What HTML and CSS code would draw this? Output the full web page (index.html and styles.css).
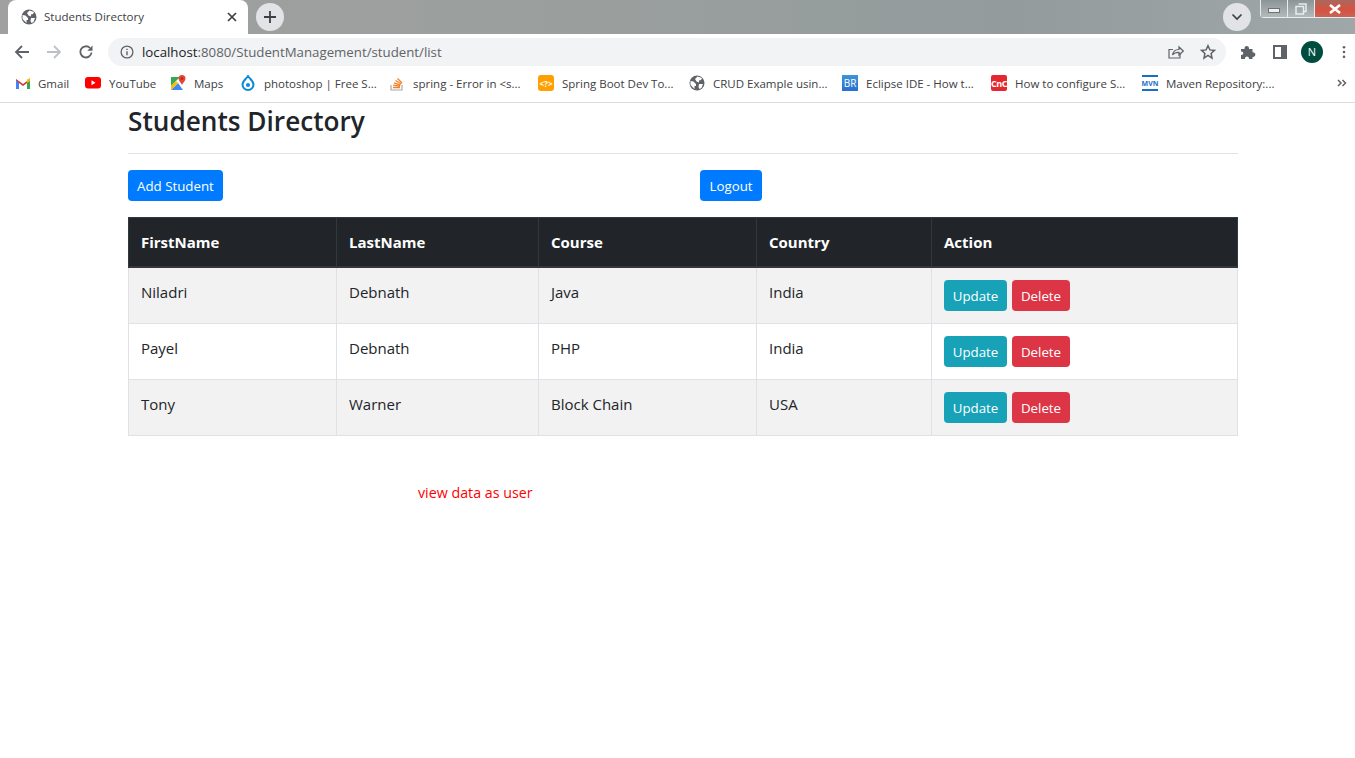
FILE: index.html
```html
<!DOCTYPE html>
<html lang="en">
<head>
    <meta charset="UTF-8">
    <title>Students Directory</title>
    <link rel="stylesheet" href="styles.css">
</head>
<body>
    <div class="browser">
        <div class="tabstrip">
            <div class="tab">
                <svg class="favicon" viewBox="0 0 16 16"><circle cx="8" cy="8" r="7.500" fill="#5f6368"/><path d="M1.500 6l3 .5 2.500 2.500 0 2-1.500 0 0 3-4-4zM8.500 1.500l4.500 1.500-1 2-2 .5 0 2-2.500-1-1.500-2.500zM10 9l4 0-1.500 4-2 1-1-2z" fill="#fff"/></svg>
                <span class="tab-title">Students Directory</span>
                <svg class="tab-close" viewBox="0 0 10 10"><path d="M1 1l8 8M9 1l-8 8" stroke="#3c4043" stroke-width="1.700"/></svg>
            </div>
            <div class="newtab"><svg viewBox="0 0 14 14"><path d="M7 1v12M1 7h12" stroke="#3c4043" stroke-width="1.800"/></svg></div>
            <div class="tabsearch"><svg viewBox="0 0 12 8"><path d="M1.500 1.500L6 6l4.500-4.500" fill="none" stroke="#3c4043" stroke-width="1.700"/></svg></div>
            <div class="winctl">
                <div class="win-btn"><span class="win-min"></span></div>
                <div class="win-btn"><svg viewBox="0 0 12 12"><path d="M3.500 1h7.500v7.500H8.500M1 3.500h7.500V11H1z" fill="none" stroke="#e8ecee" stroke-width="1.500"/></svg></div>
                <div class="win-btn win-close"><svg viewBox="0 0 14 10"><path d="M2 1l10 8M12 1L2 9" stroke="#fff" stroke-width="2.600"/></svg></div>
            </div>
        </div>
        <div class="toolbar">
            <svg class="nav-icon" viewBox="0 0 16 16"><path d="M15 8H2M8 2L2 8l6 6" fill="none" stroke="#5f6368" stroke-width="1.800"/></svg>
            <svg class="nav-icon" viewBox="0 0 16 16"><path d="M1 8h13M8 2l6 6-6 6" fill="none" stroke="#bdc1c6" stroke-width="1.800"/></svg>
            <svg class="nav-icon" viewBox="0 0 16 16"><path d="M13.500 8.500A5.600 5.600 0 1 1 12 4" fill="none" stroke="#5f6368" stroke-width="1.800"/><path d="M14.500 1.500v5.200H9.300z" fill="#5f6368"/></svg>
            <div class="omnibox">
                <svg class="info-icon" viewBox="0 0 14 14"><circle cx="7" cy="7" r="5.900" fill="none" stroke="#5f6368" stroke-width="1.300"/><path d="M7 6.200v4M7 3.800v1.300" stroke="#5f6368" stroke-width="1.400"/></svg>
                <span class="url"><span class="url-host">localhost</span>:8080/StudentManagement/student/list</span>
                <svg class="share-icon" viewBox="0 0 16 16"><path d="M12 9.500V14H1V5.500h4" fill="none" stroke="#5f6368" stroke-width="1.200"/><path d="M4.500 11c.5-3.500 3-5.500 6.500-5.500V3l4.300 4-4.300 4V8.300C8.500 8.200 6 9 4.500 11z" fill="none" stroke="#5f6368" stroke-width="1.200"/></svg>
                <svg class="star-icon" viewBox="0 0 16 16"><path d="M8 1.700l1.900 4.200 4.600.5-3.400 3.100.9 4.500L8 11.300l-4 2.700.9-4.500L1.500 6.400l4.600-.5z" fill="none" stroke="#5f6368" stroke-width="1.500"/></svg>
            </div>
            <svg class="ext-icon" viewBox="0 0 16 16"><path d="M1 5h3.500C4 1 9.500 1 9 5h3.500v3.300c3.800-.4 3.800 5 0 4.700V15H9c.3-3.300-4.300-3.300-4 0H1v-4c3 .3 3-3.800 0-3.500z" fill="#5f6368"/></svg>
            <div class="panel-icon"></div>
            <div class="avatar">N</div>
            <svg class="menu-icon" viewBox="0 0 4 16"><circle cx="2" cy="2.500" r="1.500" fill="#5f6368"/><circle cx="2" cy="8" r="1.500" fill="#5f6368"/><circle cx="2" cy="13.500" r="1.500" fill="#5f6368"/></svg>
        </div>
        <div class="bookmarks">
            <div class="bm bm-gmail">
                <svg viewBox="0 0 16 12"><path d="M1 12V2l7 5 7-5v10h-3V6L8 9 4 6v6z" fill="#d93025"/><path d="M1 12V3l3 3v6z" fill="#4285f4"/><path d="M15 12V3l-3 3v6z" fill="#34a853"/><path d="M12 2.500L15 1v3l-3 2z" fill="#fbbc04"/></svg>
                <span>Gmail</span>
            </div>
            <div class="bm bm-youtube">
                <svg viewBox="0 0 16 12"><rect width="16" height="11.500" rx="3" fill="#f00"/><path d="M6.500 3.300l4 2.500-4 2.500z" fill="#fff"/></svg>
                <span>YouTube</span>
            </div>
            <div class="bm bm-maps">
                <svg viewBox="0 0 16 16"><path d="M1 2h9l-9 9z" fill="#34a853"/><path d="M1 15l7-7 5 7z" fill="#4285f4"/><path d="M1 11l5-5 2 2-7 7z" fill="#fbbc04"/><path d="M12 0a3.500 3.500 0 0 1 3.500 3.500C15.500 6 13 7.500 12 10c-1-2.500-3.500-4-3.500-6.500A3.500 3.500 0 0 1 12 0z" fill="#ea4335"/><circle cx="12" cy="3.500" r="1.200" fill="#a52714"/></svg>
                <span>Maps</span>
            </div>
            <div class="bm bm-drupal">
                <svg viewBox="0 0 16 16"><path d="M8 1c1 2.500 5.500 4.500 5.500 8.500a5.500 5.500 0 0 1-11 0C2.500 5.500 7 3.500 8 1z" fill="none" stroke="#0a8bd6" stroke-width="2"/><circle cx="8" cy="10" r="2" fill="#0a8bd6"/></svg>
                <span>photoshop | Free S...</span>
            </div>
            <div class="bm bm-stack">
                <svg viewBox="0 0 16 16"><path d="M2 10v5h11v-5" fill="none" stroke="#a9a9a9" stroke-width="1.200"/><path d="M4 12.500h7M4.200 10.200l6.800 1M5 7.800l6.500 2.300M6.500 5.500l5.800 3.500M8.500 3.500l4.500 4.500" stroke="#f48024" stroke-width="1.300"/></svg>
                <span>spring - Error in &lt;s...</span>
            </div>
            <div class="bm bm-boot">
                <span class="bm-tile tile-boot">&lt;?&gt;</span>
                <span>Spring Boot Dev To...</span>
            </div>
            <div class="bm bm-crud">
                <svg viewBox="0 0 16 16"><circle cx="8" cy="8" r="7.500" fill="#5f6368"/><path d="M1.500 6l3 .5 2.500 2.500 0 2-1.500 0 0 3-4-4zM8.500 1.500l4.500 1.500-1 2-2 .5 0 2-2.500-1-1.500-2.500zM10 9l4 0-1.500 4-2 1-1-2z" fill="#fff"/></svg>
                <span>CRUD Example usin...</span>
            </div>
            <div class="bm bm-eclipse">
                <span class="bm-tile tile-br">BR</span>
                <span>Eclipse IDE - How t...</span>
            </div>
            <div class="bm bm-cnc">
                <span class="bm-tile tile-cnc">CnC</span>
                <span>How to configure S...</span>
            </div>
            <div class="bm bm-maven">
                <span class="bm-tile tile-mvn">MVN</span>
                <span>Maven Repository:...</span>
            </div>
            <svg class="bm-more" viewBox="0 0 10 8"><path d="M1 1l3 3-3 3M5.500 1l3 3-3 3" fill="none" stroke="#5f6368" stroke-width="1.500"/></svg>
        </div>
    </div>

    <div class="container">
        <h1>Students Directory</h1>
        <hr>
        <div class="actions">
            <div><a class="btn btn-primary" href="#">Add Student</a></div>
            <div><a class="btn btn-primary btn-logout" href="#">Logout</a></div>
        </div>
        <table class="students">
            <thead>
                <tr>
                    <th class="col-first">FirstName</th>
                    <th class="col-last">LastName</th>
                    <th class="col-course">Course</th>
                    <th class="col-country">Country</th>
                    <th>Action</th>
                </tr>
            </thead>
            <tbody>
                <tr>
                    <td>Niladri</td>
                    <td>Debnath</td>
                    <td>Java</td>
                    <td>India</td>
                    <td><div class="row-actions"><a class="btn btn-info" href="#">Update</a><a class="btn btn-danger" href="#">Delete</a></div></td>
                </tr>
                <tr>
                    <td>Payel</td>
                    <td>Debnath</td>
                    <td>PHP</td>
                    <td>India</td>
                    <td><div class="row-actions"><a class="btn btn-info" href="#">Update</a><a class="btn btn-danger" href="#">Delete</a></div></td>
                </tr>
                <tr>
                    <td>Tony</td>
                    <td>Warner</td>
                    <td>Block Chain</td>
                    <td>USA</td>
                    <td><div class="row-actions"><a class="btn btn-info" href="#">Update</a><a class="btn btn-danger" href="#">Delete</a></div></td>
                </tr>
            </tbody>
        </table>
        <div class="user-link"><a href="#">view data as user</a></div>
    </div>
</body>
</html>
```

FILE: styles.css
```css
* {
    box-sizing: border-box;
}
body {
    margin: 0;
    background-color: white;
    font-family: "Open Sans", "Noto Sans", Arial, sans-serif;
    color: #212529;
    overflow: hidden;
    height: 758px;
}

/* browser chrome */
.browser {
    height: 103px;
    border-bottom: 1px solid #dadce0;
    background-color: white;
}
.tabstrip {
    position: relative;
    height: 34px;
    display: flex;
    align-items: center;
    padding-left: 8px;
    background: linear-gradient(90deg, #a0a0a0 0%, #9a9f9e 45%, #939b9c 75%, #a0a7a9 100%);
}
.tab {
    width: 240px;
    height: 34px;
    align-self: flex-end;
    display: flex;
    align-items: center;
    padding: 0 11px 0 13px;
    background-color: white;
    border-radius: 8px 8px 0 0;
}
.favicon {
    width: 16px;
    height: 16px;
}
.tab-title {
    margin-left: 7px;
    padding-bottom: 2px;
    flex-grow: 1;
    font-size: 11.5px;
    color: #3c4043;
}
.tab-close {
    width: 10px;
    height: 10px;
}
.newtab, .tabsearch {
    width: 28px;
    height: 28px;
    border-radius: 50%;
    background-color: #e1e3e6;
    display: flex;
    align-items: center;
    justify-content: center;
}
.newtab {
    margin-left: 8px;
}
.newtab svg {
    width: 14px;
    height: 14px;
}
.tabsearch {
    margin-left: auto;
    margin-right: 104px;
}
.tabsearch svg {
    width: 12px;
    height: 8px;
}
.winctl {
    position: absolute;
    top: 0;
    right: 0;
    width: 95px;
    height: 18px;
    display: flex;
    border: 1px solid #e8ecee;
    border-top: none;
    border-right: none;
    border-radius: 0 0 0 4px;
}
.win-btn {
    width: 27px;
    display: flex;
    align-items: center;
    justify-content: center;
    border-right: 1px solid #e8ecee;
    background: linear-gradient(#8b9496, #b3babc);
}
.win-btn svg {
    width: 12px;
    height: 12px;
}
.win-close {
    flex-grow: 1;
    border-right: none;
    background: linear-gradient(#a9685e, #d9513f 60%, #c4665a);
}
.win-close svg {
    width: 14px;
    height: 10px;
}
.win-min {
    width: 12px;
    height: 5px;
    margin-top: 3px;
    background-color: #eef0f1;
    border: 1px solid #6d7375;
}
.toolbar {
    height: 32px;
    margin-top: 2px;
    display: flex;
    align-items: center;
    padding: 0 9px 0 14px;
    background-color: white;
}
.nav-icon {
    width: 16px;
    height: 16px;
    margin-right: 16px;
}
.omnibox {
    flex-grow: 1;
    height: 28px;
    margin-left: -2px;
    display: flex;
    align-items: center;
    padding: 0 10px 0 12px;
    border-radius: 14px;
    background-color: #f1f3f4;
}
.info-icon {
    width: 14px;
    height: 14px;
}
.url {
    margin-left: 8px;
    flex-grow: 1;
    font-size: 13.25px;
    color: #5f6368;
}
.url-host {
    color: #202124;
}
.share-icon {
    width: 16px;
    height: 16px;
    margin-right: 16px;
}
.star-icon {
    width: 16px;
    height: 16px;
}
.ext-icon {
    width: 16px;
    height: 16px;
    margin-left: 14px;
}
.panel-icon {
    width: 14px;
    height: 14px;
    margin-left: 17px;
    border: 2px solid #5f6368;
    border-right-width: 6px;
}
.avatar {
    width: 22px;
    height: 22px;
    margin-left: 14px;
    border-radius: 50%;
    background-color: #004d40;
    color: white;
    font-size: 11px;
    line-height: 22px;
    text-align: center;
}
.menu-icon {
    width: 4px;
    height: 14px;
    margin-left: 19px;
}
.bookmarks {
    position: relative;
    height: 36px;
    display: flex;
    align-items: center;
    font-size: 11.5px;
    color: #3c4043;
}
.bm {
    position: absolute;
    top: 7px;
    display: flex;
    align-items: center;
    gap: 8px;
    white-space: nowrap;
}
.bm svg, .bm-tile {
    width: 16px;
    height: 16px;
    flex-shrink: 0;
}
.bm-gmail { left: 15px; gap: 7px; }
.bm-youtube { left: 85px; }
.bm-maps { left: 170px; }
.bm-drupal { left: 240px; }
.bm-stack { left: 389px; }
.bm-boot { left: 538px; }
.bm-crud { left: 689px; }
.bm-eclipse { left: 842px; }
.bm-cnc { left: 991px; }
.bm-maven { left: 1142px; }
.bm-tile {
    display: flex;
    align-items: center;
    justify-content: center;
    color: white;
    font-size: 8px;
    font-weight: 700;
}
.tile-boot {
    background-color: #ffa000;
    border-radius: 3px;
}
.tile-br {
    background: linear-gradient(#3d95d8, #2a6fd0);
    font-weight: 400;
    font-size: 10px;
}
.tile-cnc {
    background-color: #e5282e;
    border-radius: 2px;
    font-size: 9px;
    letter-spacing: -0.5px;
}
.tile-mvn {
    color: #1a6fc4;
    font-size: 7px;
    border-top: 2px solid #1a6fc4;
    border-bottom: 2px solid #1a6fc4;
}
.bm-more {
    position: absolute;
    right: 8px;
    top: 11px;
    width: 10px;
    height: 8px;
}

/* page */
.container {
    width: 1110px;
    margin-left: 128px;
}
h1 {
    margin: 0;
    font-size: 26.2px;
    font-weight: 600;
    line-height: 36px;
}
hr {
    margin: 14px 0 16px;
    border: none;
    border-top: 1px solid #e1e3e6;
}
.actions {
    display: grid;
    grid-template-columns: 572px auto;
    margin-bottom: 16px;
}
.btn {
    display: inline-block;
    padding: 0 9px;
    height: 31px;
    line-height: 32px;
    border-radius: 4px;
    color: white;
    font-size: 13.3px;
    text-align: center;
    text-decoration: none;
}
.btn-primary {
    background-color: #007bff;
}
.btn-logout {
    width: 62px;
}
.btn-info {
    width: 63px;
    padding: 0;
    background-color: #17a2b8;
}
.btn-danger {
    width: 58px;
    padding: 0;
    background-color: #dc3545;
}
.row-actions {
    display: flex;
    gap: 5px;
}
.students {
    width: 1110px;
    table-layout: fixed;
    border-collapse: collapse;
    font-size: 15px;
}
.students th, .students td {
    padding: 12px;
    text-align: left;
    vertical-align: top;
    border: 1px solid #dee2e6;
}
.students th {
    height: 49px;
    background-color: #212529;
    border-color: #32383e;
    border-bottom-width: 2px;
    color: white;
    font-weight: 700;
    line-height: 24px;
}
.students td {
    height: 56px;
    line-height: 24px;
}
.students tbody tr:nth-child(odd) {
    background-color: #f2f2f2;
}
.col-first { width: 208px; }
.col-last { width: 202px; }
.col-course { width: 218px; }
.col-country { width: 175px; }
.user-link {
    margin-top: 47px;
    padding-left: 290px;
    font-size: 14.25px;
    line-height: 20px;
}
.user-link a {
    color: red;
    text-decoration: none;
}
```
